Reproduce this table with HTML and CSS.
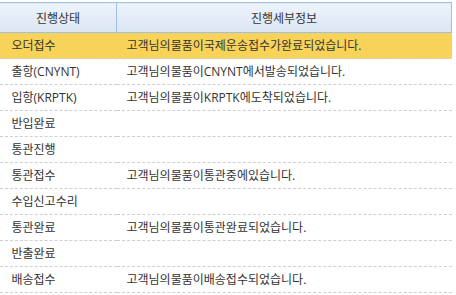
FILE: index.html
```html
<!DOCTYPE html>
<html lang="ko">
<head>
<meta charset="utf-8">
<link rel="stylesheet" href="styles.css">
</head>
<body>
<table class="grid">
  <thead>
    <tr><th class="c1">진행상태</th><th class="c2">진행세부정보</th></tr>
  </thead>
  <tbody>
    <tr class="sel"><td>오더접수</td><td>고객님의물품이국제운송접수가완료되었습니다.</td></tr>
    <tr><td>출항(CNYNT)</td><td>고객님의물품이CNYNT에서발송되었습니다.</td></tr>
    <tr><td>입항(KRPTK)</td><td>고객님의물품이KRPTK에도착되었습니다.</td></tr>
    <tr><td>반입완료</td><td></td></tr>
    <tr><td>통관진행</td><td></td></tr>
    <tr><td>통관접수</td><td>고객님의물품이통관중에있습니다.</td></tr>
    <tr><td>수입신고수리</td><td></td></tr>
    <tr><td>통관완료</td><td>고객님의물품이통관완료되었습니다.</td></tr>
    <tr><td>반출완료</td><td></td></tr>
    <tr><td>배송접수</td><td>고객님의물품이배송접수되었습니다.</td></tr>
  </tbody>
</table>
</body>
</html>
```
FILE: styles.css
```css
html, body {
  margin: 0;
  padding: 0;
  background: #fff;
}
body {
  padding-top: 2px;
  font-family: "Open Sans", "Noto Sans CJK KR", sans-serif;
  font-size: 12px;
  color: #333;
}
.grid {
  border-collapse: collapse;
  width: 453px;
  margin-left: -1px;
  table-layout: fixed;
}
.grid th {
  height: 29px;
  padding: 0;
  font-weight: normal;
  font-size: 12px;
  color: #333;
  text-align: center;
  border: 1px solid #9fc0e4;
  background: linear-gradient(#edf3fb, #dbe6f4);
}
.grid th.c1 { width: 116px; }
.grid td {
  height: 25px;
  padding: 0 0 0 12px;
  border-bottom: 1px dashed #cfcfcf;
  white-space: nowrap;
  line-height: 25px;
}
.grid td + td {
  padding-left: 10px;
}
.grid tr.sel td {
  background: #f7d359;
}
```
